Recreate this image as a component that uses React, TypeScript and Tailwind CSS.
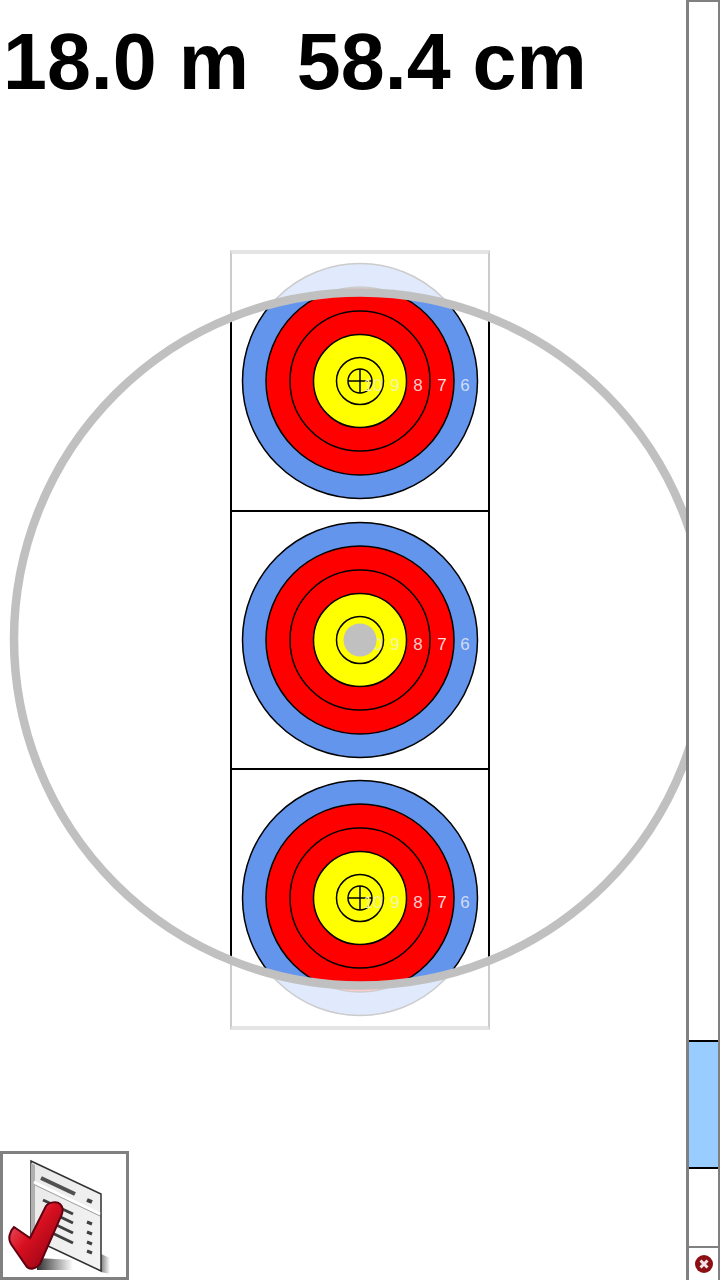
import React from 'react';

const Target = ({ hit = false, cy = 128 }: { hit?: boolean; cy?: number }) => {
  const labels = [
    { t: '10', x: 141, c: '#f0f0a0' },
    { t: '9', x: 163, c: '#f4f4b0' },
    { t: '8', x: 186, c: '#ffc8c8' },
    { t: '7', x: 210, c: '#ffd8d8' },
    { t: '6', x: 233, c: '#d0dcf4' },
  ];
  return (
    <svg width="256" height="256" viewBox="0 0 256 256" className="block">
      <circle cx="128" cy={cy} r="117.5" fill="#6495ed" stroke="#000" strokeWidth="1.5" />
      <circle cx="128" cy={cy} r="94" fill="#ff0000" stroke="#000" strokeWidth="1.5" />
      <circle cx="128" cy={cy} r="70" fill="#ff0000" stroke="#000" strokeWidth="1.5" />
      <circle cx="128" cy={cy} r="46.5" fill="#ffff00" stroke="#000" strokeWidth="1.5" />
      <circle cx="128" cy={cy} r="23.5" fill="#ffff00" stroke="#000" strokeWidth="1.5" />
      <circle cx="128" cy={cy} r="12" fill="#ffff00" stroke="#000" strokeWidth="1.5" />
      <path d={`M116 ${cy}H140M128 ${cy - 12}V${cy + 12}`} stroke="#000" strokeWidth="1.5" />
      {labels.map((l) => (
        <text key={l.t} x={l.x} y={cy + 10} textAnchor="middle" fontSize="17" fill={l.c} fontFamily="'Liberation Sans', sans-serif">
          {l.t}
        </text>
      ))}
      {hit && <circle cx="128" cy={cy} r="16.5" fill="#c0c0c0" />}
    </svg>
  );
};

const ChecklistIcon = () => (
  <svg width="123" height="123" viewBox="0 0 123 123" className="block">
    <defs>
      <linearGradient id="page" x1="0" y1="0" x2="1" y2="1">
        <stop offset="0" stopColor="#e8e8e8" />
        <stop offset="1" stopColor="#f4f4f4" />
      </linearGradient>
      <linearGradient id="tick" x1="0" y1="0" x2="1" y2="1">
        <stop offset="0" stopColor="#f07080" />
        <stop offset="0.45" stopColor="#d81020" />
        <stop offset="1" stopColor="#800010" />
      </linearGradient>
      <linearGradient id="shadow" x1="0" y1="0" x2="1" y2="0">
        <stop offset="0" stopColor="#303030" />
        <stop offset="1" stopColor="#ffffff" />
      </linearGradient>
      <linearGradient id="pageShadow" x1="0" y1="0" x2="1" y2="0">
        <stop offset="0" stopColor="#808080" />
        <stop offset="1" stopColor="#ffffff" />
      </linearGradient>
    </defs>
    <path d="M34 104L70 106V116H34Z" fill="url(#shadow)" />
    <path d="M98 100L107 104V120L98 118Z" fill="url(#pageShadow)" />
    <path d="M28 7L98 40V117L28 84Z" fill="url(#page)" stroke="#303030" strokeWidth="1.5" />
    <path d="M28 9L32 11V85L28 84Z" fill="#b0b0b0" />
    <path d="M31 28L97 60" stroke="#ffffff" strokeWidth="3" />
    <path d="M32 31L97 62" stroke="#a0a0a0" strokeWidth="1" />
    <path d="M38 24L72 40" stroke="#505050" strokeWidth="4" />
    <path d="M84 46L89 48" stroke="#404040" strokeWidth="4" />
    <path d="M40 46L70 60M45 57L70 69M45 67L70 79M45 77L70 89" stroke="#404040" strokeWidth="3" />
    <path d="M84 68L89 70M84 78L89 80M84 88L89 90M84 97L89 99" stroke="#404040" strokeWidth="3" />
    <path
      d="M11 73L27 84L43 52C46 48 54 47 57 50C60 53 60 57 59 60L37 110C33 115 27 116 24 113L8 90C5 85 6 78 11 73Z"
      fill="url(#tick)"
      stroke="#600010"
      strokeWidth="2"
    />
  </svg>
);

const App = () => {
  return (
    <div className="relative flex h-[1280px] w-[720px] overflow-hidden bg-white font-['Liberation_Sans',sans-serif]">
      <div className="relative flex w-[686px] flex-col overflow-hidden">
        <div className="h-[250px] whitespace-pre pl-[3px] pt-[16px] text-[79px] font-bold leading-[92px] text-black">
          18.0 m  <span className="ml-[4px]">58.4 cm</span>
        </div>

        <div className="ml-[230px] flex w-[260px] flex-col border-x-2 border-y-4 border-x-black border-y-[#787878]">
          <Target cy={127} />
          <div className="border-y-2 border-black">
            <Target hit />
          </div>
          <Target />
        </div>

        <div className="mt-auto flex h-[129px] w-[129px] items-center justify-center border-[3px] border-[#808080]">
          <ChecklistIcon />
        </div>

        {/* everything outside the reach circle is faded */}
        <svg width="686" height="1280" viewBox="0 0 686 1280" className="pointer-events-none absolute left-0 top-0">
          <path
            d="M0 240H686V1040H0Z M360.5 292.5A346.5 346.5 0 1 0 360.5 985.5A346.5 346.5 0 1 0 360.5 292.5Z"
            fill="#ffffff"
            fillOpacity="0.8"
            fillRule="evenodd"
          />
          <circle cx="360.5" cy="639" r="346.5" fill="none" stroke="#c0c0c0" strokeWidth="8.5" />
        </svg>
      </div>

      <div className="flex h-full w-[34px] flex-col border-l-[3px] border-r-2 border-t-2 border-[#808080]">
        <div className="h-[1038px]" />
        <div className="h-[129px] border-y-2 border-black bg-[#99ccff]" />
        <div className="flex-1" />
        <div className="flex h-[34px] items-center justify-center border-t-2 border-[#808080]">
          <svg width="20" height="20" viewBox="0 0 20 20">
            <circle cx="10" cy="10" r="9" fill="#8b0f14" />
            <path d="M6.5 6.5L13.5 13.5M13.5 6.5L6.5 13.5" stroke="#f4e4e4" strokeWidth="3" />
          </svg>
        </div>
      </div>
    </div>
  );
};

export default App;
